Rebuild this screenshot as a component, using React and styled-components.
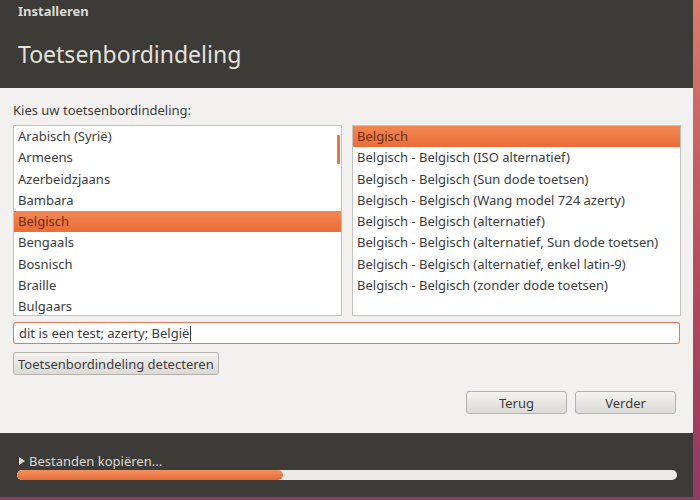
import React from "react";
import styled, { createGlobalStyle } from "styled-components";

const Global = createGlobalStyle`
  html, body { margin: 0; padding: 0; }
  body {
    width: 700px;
    height: 500px;
    overflow: hidden;
    font-family: "Noto Sans", "DejaVu Sans", sans-serif;
    background: #b4465e;
  }
`;

const Desktop = styled.div`
  width: 700px;
  height: 500px;
  display: flex;
  background: linear-gradient(180deg, #e07a6a 0%, #b4465e 60%, #8e3a63 100%);
`;

const Venster = styled.div`
  width: 693px;
  height: 497px;
  display: flex;
  flex-direction: column;
  background: #f2f1f0;
`;

const Kop = styled.header`
  height: 88px;
  background: #3c3b37;
  padding: 0 18px;
  box-sizing: border-box;
  display: flex;
  flex-direction: column;
`;

const VensterTitel = styled.div`
  font-size: 13px;
  font-weight: 700;
  color: #dcdad5;
  padding-top: 2px;
  height: 18px;
`;

const PaginaTitel = styled.h1`
  margin: 0;
  margin-top: 18px;
  font-size: 23px;
  font-weight: 400;
  color: #e4e1dc;
`;

const Inhoud = styled.main`
  flex: 1;
  padding: 13px 13px 0 13px;
  display: flex;
  flex-direction: column;
`;

const Label = styled.div`
  font-size: 13px;
  color: #3c3c3c;
  height: 16px;
  margin-bottom: 8px;
`;

const Lijsten = styled.div`
  display: grid;
  grid-template-columns: 329px 329px;
  gap: 10px;
`;

const Lijst = styled.ul`
  position: relative;
  list-style: none;
  margin: 0;
  padding: 0;
  height: 191px;
  background: #ffffff;
  border: 1px solid #c6c3be;
  box-sizing: border-box;
  overflow: hidden;
`;

const Rij = styled.li`
  height: 21.3px;
  line-height: 21px;
  padding: 0 4px;
  font-size: 13px;
  color: ${(props) => (props.$actief ? "#6e2d12" : "#3c3c3c")};
  background: ${(props) =>
    props.$actief ? "linear-gradient(180deg, #f28752 0%, #ea6d38 100%)" : "transparent"};
  white-space: nowrap;
`;

const Schuifbalk = styled.div`
  position: absolute;
  right: 1px;
  top: 9px;
  width: 3px;
  height: 29px;
  background: #e8743f;
  border-radius: 1px;
`;

const Invoer = styled.div`
  margin-top: 6px;
  height: 22px;
  box-sizing: border-box;
  border: 1px solid #e0785a;
  border-radius: 3px;
  background: #ffffff;
  padding: 0 5px;
  font-size: 13px;
  line-height: 20px;
  color: #3c3c3c;
  display: flex;
  align-items: center;
`;

const Cursor = styled.span`
  display: inline-block;
  width: 1px;
  height: 15px;
  background: #3c3c3c;
  margin-left: 1px;
`;

const Knop = styled.button`
  font-family: inherit;
  font-size: 13px;
  color: #3c3c3c;
  height: 23px;
  width: ${(props) => props.$breedte || "auto"};
  padding: 0 4px;
  border: 1px solid #b5b2ac;
  border-radius: 3px;
  background: linear-gradient(180deg, #f4f3f1 0%, #dcdad6 100%);
  box-sizing: border-box;
`;

const DetecteerRij = styled.div`
  margin-top: 8px;
  display: flex;
`;

const Navigatie = styled.div`
  margin-top: 16px;
  display: flex;
  justify-content: flex-end;
  gap: 8px;
  padding-right: 4px;
`;

const Voet = styled.footer`
  height: 64px;
  background: #3c3b37;
  padding: 20px 16px 0 17px;
  box-sizing: border-box;
`;

const Status = styled.div`
  font-size: 13px;
  color: #dcdad5;
  display: flex;
  align-items: center;
  gap: 2px;
  height: 16px;
  padding-left: 2px;
`;

const Pijl = styled.span`
  display: inline-block;
  width: 0;
  height: 0;
  border-top: 4px solid transparent;
  border-bottom: 4px solid transparent;
  border-left: 6px solid #dcdad5;
  margin-right: 2px;
`;

const Balk = styled.div`
  height: 10px;
  margin-top: 1px;
  border-radius: 5px;
  background: #ebeae7;
  overflow: hidden;
`;

const Vulling = styled.div`
  height: 100%;
  border-radius: 5px;
  background: linear-gradient(180deg, #f3915f 0%, #e56b35 100%);
`;

const talen = [
  "Arabisch (Syrië)",
  "Armeens",
  "Azerbeidzjaans",
  "Bambara",
  "Belgisch",
  "Bengaals",
  "Bosnisch",
  "Braille",
  "Bulgaars",
];

const varianten = [
  "Belgisch",
  "Belgisch - Belgisch (ISO alternatief)",
  "Belgisch - Belgisch (Sun dode toetsen)",
  "Belgisch - Belgisch (Wang model 724 azerty)",
  "Belgisch - Belgisch (alternatief)",
  "Belgisch - Belgisch (alternatief, Sun dode toetsen)",
  "Belgisch - Belgisch (alternatief, enkel latin-9)",
  "Belgisch - Belgisch (zonder dode toetsen)",
];

const App = () => {
  const voortgang = 40.3;
  return (
    <Desktop>
      <Global />
      <Venster>
        <Kop>
          <VensterTitel>Installeren</VensterTitel>
          <PaginaTitel>Toetsenbordindeling</PaginaTitel>
        </Kop>
        <Inhoud>
          <Label>Kies uw toetsenbordindeling:</Label>
          <Lijsten>
            <Lijst>
              {talen.map((taal) => (
                <Rij key={taal} $actief={taal === "Belgisch"}>
                  {taal}
                </Rij>
              ))}
              <Schuifbalk />
            </Lijst>
            <Lijst>
              {varianten.map((v, i) => (
                <Rij key={v} $actief={i === 0}>
                  {v}
                </Rij>
              ))}
            </Lijst>
          </Lijsten>
          <Invoer>
            dit is een test; azerty; België
            <Cursor />
          </Invoer>
          <DetecteerRij>
            <Knop>Toetsenbordindeling detecteren</Knop>
          </DetecteerRij>
          <Navigatie>
            <Knop $breedte="101px">Terug</Knop>
            <Knop $breedte="101px">Verder</Knop>
          </Navigatie>
        </Inhoud>
        <Voet>
          <Status>
            <Pijl />
            Bestanden kopiëren...
          </Status>
          <Balk>
            <Vulling style={{ width: `${voortgang}%` }} />
          </Balk>
        </Voet>
      </Venster>
    </Desktop>
  );
};

export default App;
